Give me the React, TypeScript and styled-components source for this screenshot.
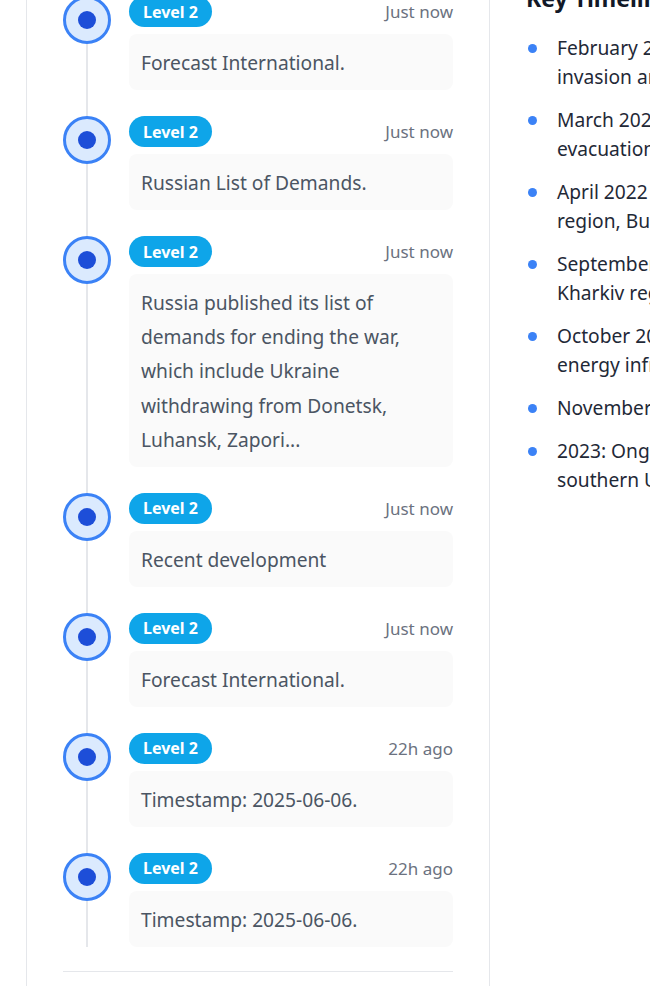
import React from "react";
import styled, { createGlobalStyle } from "styled-components";

const GlobalStyle = createGlobalStyle`
  html, body {
    margin: 0;
    padding: 0;
    background: #ffffff;
    overflow: hidden;
  }
  body {
    font-family: "Noto Sans", "Open Sans", Arial, sans-serif;
    -webkit-font-smoothing: antialiased;
  }
  * { box-sizing: border-box; }
`;

const Viewport = styled.div`
  width: 650px;
  height: 986px;
  overflow: hidden;
`;

const Layout = styled.div`
  display: grid;
  grid-template-columns: 464px 520px;
  padding-left: 26px;
  margin-top: -30px;
  width: 1010px;
`;

const LeftCard = styled.section`
  border-left: 1px solid #e5e7eb;
  border-right: 1px solid #e5e7eb;
  padding: 26px 36px 40px;
`;

const Timeline = styled.ol`
  position: relative;
  list-style: none;
  margin: 0;
  padding: 0;
  display: flex;
  flex-direction: column;
  gap: 25.8px;

  &::before {
    content: "";
    position: absolute;
    left: 23px;
    top: 0;
    bottom: 0;
    width: 2px;
    background: #e5e7eb;
  }
`;

const Item = styled.li`
  position: relative;
  display: grid;
  grid-template-columns: 48px 1fr;
  column-gap: 18px;
`;

const Marker = styled.div`
  position: relative;
  z-index: 1;
  width: 48px;
  height: 48px;
  border-radius: 50%;
  border: 3px solid #3b82f6;
  background: #dbeafe;
  display: flex;
  align-items: center;
  justify-content: center;
`;

const MarkerDot = styled.span`
  width: 18px;
  height: 18px;
  border-radius: 50%;
  background: #1d4ed8;
`;

const Content = styled.div`
  display: flex;
  flex-direction: column;
  gap: 7px;
  min-width: 0;
`;

const HeaderRow = styled.div`
  display: flex;
  align-items: center;
  justify-content: space-between;
  height: 31px;
`;

const Badge = styled.span`
  display: inline-flex;
  align-items: center;
  height: 31px;
  padding: 0 14px;
  border-radius: 999px;
  background: #0ea5e9;
  color: #ffffff;
  font-size: 16px;
  font-weight: 700;
`;

const Time = styled.span`
  font-size: 17px;
  color: #6b7280;
`;

const Bubble = styled.div`
  background: #fafafa;
  border-radius: 8px;
  padding: 12px 12px 10px;
  font-size: 19.2px;
  line-height: 34.2px;
  color: #4b5563;
`;

const Divider = styled.hr`
  border: none;
  border-top: 1px solid #e5e7eb;
  margin: 24px 0 0;
`;

const RightPanel = styled.aside`
  padding: 12px 36px 0;
`;

const Heading = styled.h3`
  margin: 0 0 20px;
  font-size: 23px;
  line-height: 32px;
  font-weight: 700;
  color: #111827;
`;

const KeyList = styled.ul`
  list-style: none;
  margin: 0;
  padding: 0;
  display: flex;
  flex-direction: column;
  gap: 14.4px;
  width: 431px;
`;

const KeyItem = styled.li`
  display: grid;
  grid-template-columns: 9px 1fr;
  column-gap: 20px;
  padding-left: 2px;
  font-size: 19.2px;
  line-height: 28.8px;
  color: #1f2937;
`;

const Bullet = styled.span`
  width: 9px;
  height: 9px;
  border-radius: 50%;
  background: #3b82f6;
  margin-top: 10px;
`;

type Entry = { time: string; text: string };

const entries: Entry[] = [
  { time: "Just now", text: "Forecast International." },
  { time: "Just now", text: "Russian List of Demands." },
  {
    time: "Just now",
    text:
      "Russia published its list of demands for ending the war, which include Ukraine withdrawing from Donetsk, Luhansk, Zapori...",
  },
  { time: "Just now", text: "Recent development" },
  { time: "Just now", text: "Forecast International." },
  { time: "22h ago", text: "Timestamp: 2025-06-06." },
  { time: "22h ago", text: "Timestamp: 2025-06-06." },
];

const keyEvents: string[] = [
  "February 24, 2022: Russia begins full-scale invasion and advances toward Kyiv",
  "March 2022: Siege of Mariupol and civilian evacuations from besieged cities",
  "April 2022 Russian withdrawal from Kyiv region, Bucha atrocities revealed",
  "September 2022: Ukrainian forces retake Kharkiv region",
  "October 2022: Russian missile strikes hit energy infrastructure nationwide",
  "November 2022: Liberation of Kherson",
  "2023: Ongoing battles across eastern and southern Ukraine",
];

export default function App() {
  return (
    <>
      <GlobalStyle />
      <Viewport>
        <Layout>
          <LeftCard>
            <Timeline>
              {entries.map((e, i) => (
                <Item key={i}>
                  <Marker>
                    <MarkerDot />
                  </Marker>
                  <Content>
                    <HeaderRow>
                      <Badge>Level 2</Badge>
                      <Time>{e.time}</Time>
                    </HeaderRow>
                    <Bubble>{e.text}</Bubble>
                  </Content>
                </Item>
              ))}
            </Timeline>
            <Divider />
          </LeftCard>
          <RightPanel>
            <Heading>Key Timeline</Heading>
            <KeyList>
              {keyEvents.map((t, i) => (
                <KeyItem key={i}>
                  <Bullet />
                  <span>{t}</span>
                </KeyItem>
              ))}
            </KeyList>
          </RightPanel>
        </Layout>
      </Viewport>
    </>
  );
}
